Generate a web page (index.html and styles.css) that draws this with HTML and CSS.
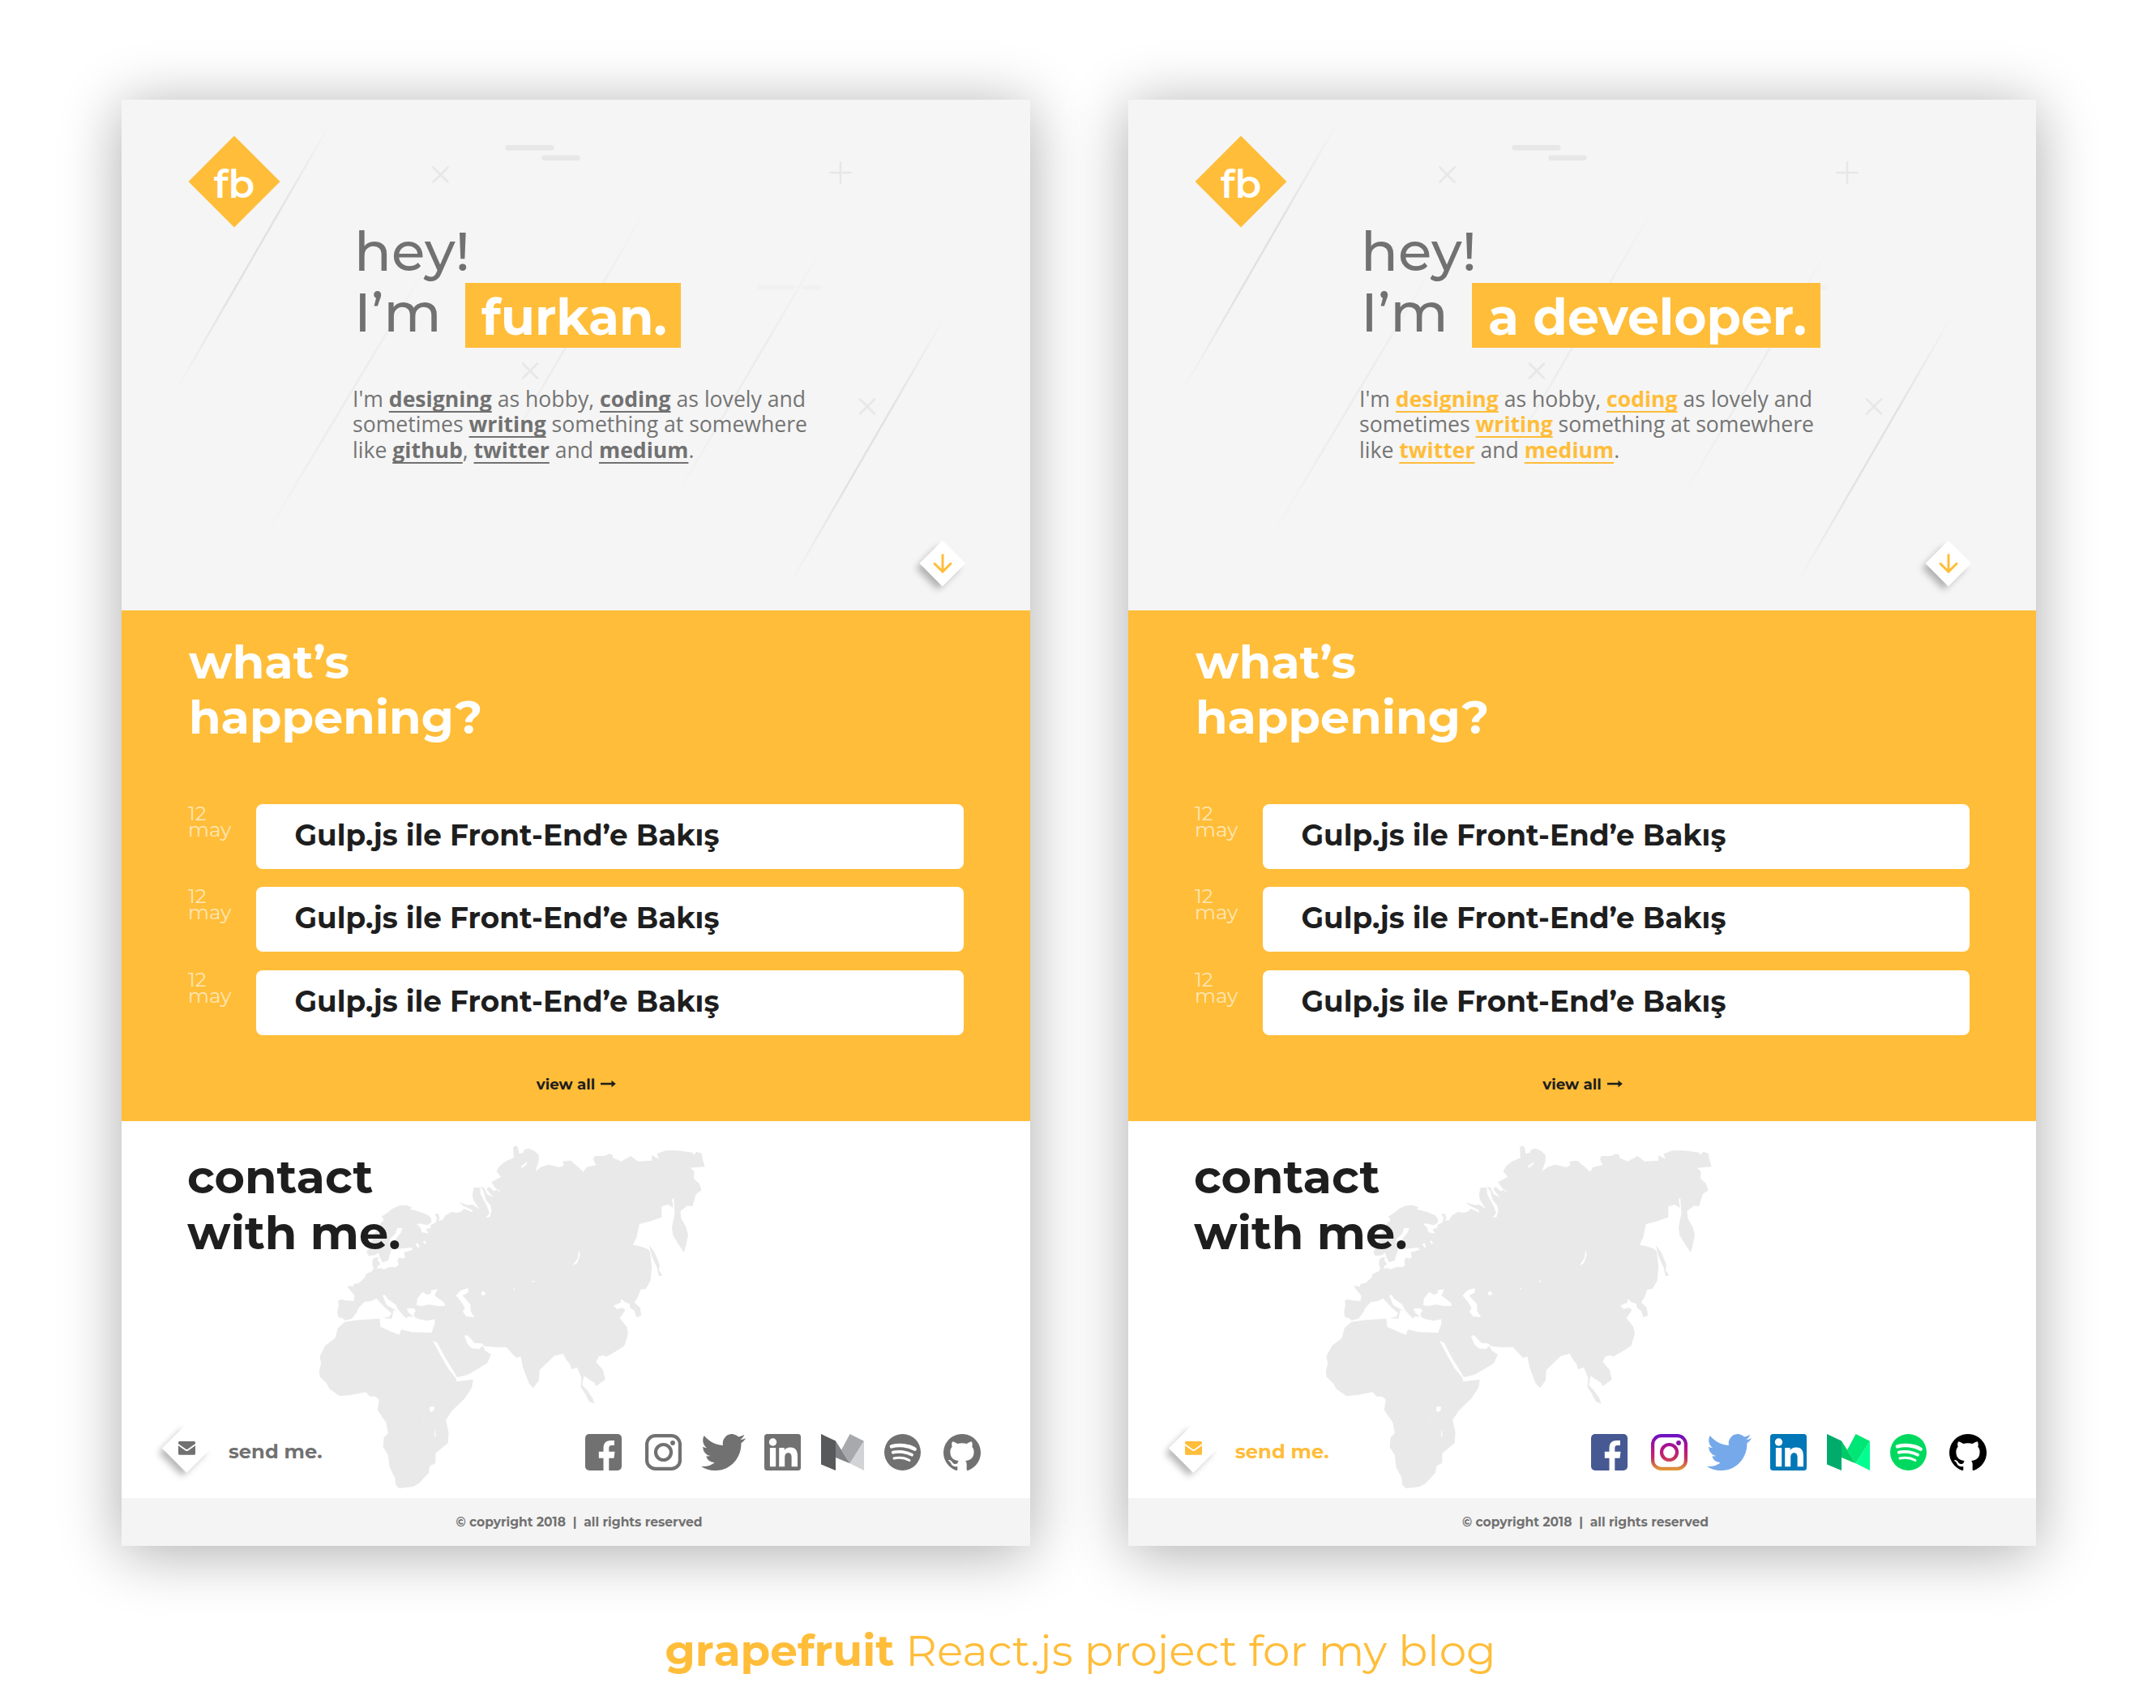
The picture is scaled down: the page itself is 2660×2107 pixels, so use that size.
FILE: index.html
```
<!DOCTYPE html>
<html lang="en">
<head>
<meta charset="utf-8">
<title>grapefruit</title>
<link rel="stylesheet" href="styles.css">
</head>
<body>
<svg class="defs" width="0" height="0" aria-hidden="true">
  <defs>
    <linearGradient id="fade" x1="0" y1="0" x2="0" y2="1">
      <stop offset="0" stop-color="#e1e1e1" stop-opacity="0"/>
      <stop offset=".35" stop-color="#e1e1e1"/>
      <stop offset=".65" stop-color="#e1e1e1"/>
      <stop offset="1" stop-color="#e1e1e1" stop-opacity="0"/>
    </linearGradient>
    <linearGradient id="insta" x1="0" y1="0" x2="0" y2="45" gradientUnits="userSpaceOnUse">
      <stop offset="0" stop-color="#6613c8"/>
      <stop offset=".35" stop-color="#b0108f"/>
      <stop offset=".65" stop-color="#c42a63"/>
      <stop offset="1" stop-color="#e2a035"/>
    </linearGradient>
    <symbol id="decor" viewBox="0 0 1121 630">
      <g stroke="url(#fade)" stroke-width="2.4">
        <path d="M257 30 68 357"/>
        <path d="M1016 267 826 595"/>
        <g opacity=".4">
          <path d="M374 209 180 533"/>
          <path d="M646 137 465 448"/>
          <path d="M863 185 685 488"/>
        </g>
      </g>
      <g stroke="#e7e7e7" stroke-width="2.6" stroke-linecap="round">
        <path d="M384.500 83.500l18 18m0-18l-18 18"/>
        <path d="M495 325.500l18 18m0-18l-18 18"/>
        <path d="M911 369.500l18 18m0-18l-18 18"/>
        <path d="M874.500 90h25m-12.500-12.500v25"/>
      </g>
      <rect x="473.500" y="56" width="60" height="6.500" rx="3" fill="#e7e7e7"/>
      <rect x="518.500" y="68.500" width="47" height="6.500" rx="3" fill="#e7e7e7"/>
      <rect x="784" y="228.500" width="47" height="6" rx="3" fill="#f1f1f1"/>
      <rect x="839" y="228.500" width="24" height="6" rx="3" fill="#f1f1f1"/>
    </symbol>
    <symbol id="map" viewBox="0 0 1568 1440" preserveAspectRatio="none">
      <path fill="#e9e9e9" fill-rule="evenodd" d="M190 747L182 738 167 735 163 715 168 690 166 673 178 669 195 673 222 675 225 655 215 642 205 630 200 622 203 618 220 622 222 612 240 608 262 588 265 575 290 563 293 552 288 540 290 520 300 514 310 512 308 525 318 538 308 545 305 555 320 553 330 558 350 549 372 550 383 541 379 528 383 514 398 518 406 512 402 495 433 485 430 477 400 480 378 483 370 460 373 445 392 420 396 405 378 404 372 425 352 445 348 470 358 485 350 505 345 525 325 532 315 512 310 495 300 505 275 508 268 495 280 470 300 420 318 388 330 375 322 362 340 350 362 332 385 322 410 320 430 328 425 335 460 345 490 358 500 372 500 385 485 394 455 388 448 390 462 405 465 420 490 425 480 408 497 405 498 393 515 385 520 368 512 352 525 352 530 368 525 378 540 375 550 358 572 345 590 348 605 345 617 333 648 347 646 338 610 320 600 310 632 320 648 318 672 335 650 300 647 280 652 255 675 255 676 280 690 305 700 325 708 350 695 366 710 364 716 340 712 322 695 300 688 270 676 253 688 255 700 280 722 292 698 262 705 252 725 268 740 262 752 278 728 255 715 235 750 215 733 195 745 175 765 158 795 145 793 105 805 100 812 112 814 130 830 125 832 115 850 110 870 120 885 135 885 155 873 195 895 178 920 170 960 180 975 172 970 158 1000 155 1015 170 1025 178 1045 197 1055 180 1090 172 1080 150 1085 138 1120 138 1138 130 1150 135 1150 145 1180 158 1215 138 1240 158 1290 155 1290 135 1315 150 1308 130 1340 118 1380 118 1435 125 1440 135 1450 122 1468 128 1472 150 1480 178 1450 180 1428 182 1442 195 1440 222 1460 240 1468 265 1448 280 1435 325 1418 322 1392 342 1395 370 1412 400 1420 430 1412 470 1405 495 1385 465 1365 430 1362 400 1372 350 1368 292 1362 300 1367 330 1348 318 1325 325 1325 365 1305 372 1290 378 1245 390 1235 440 1222 467 1245 472 1270 480 1283 490 1290 550 1285 600 1268 630 1250 632 1240 660 1228 680 1248 700 1252 728 1235 735 1228 712 1212 700 1210 685 1195 680 1180 667 1178 680 1153 692 1165 705 1185 700 1195 708 1175 738 1200 770 1205 795 1192 840 1160 862 1125 882 1120 875 1100 880 1090 900 1115 930 1123 965 1090 990 1085 978 1065 965 1047 952 1040 985 1058 1005 1078 1035 1085 1055 1065 1047 1052 1020 1035 992 1038 960 1022 920 1002 928 995 905 985 895 972 870 940 878 888 930 885 970 865 997 850 980 828 920 820 880 805 885 792 872 768 845 730 846 692 842 680 832 655 830 630 802 618 803 630 835 645 850 672 853 685 840 692 858 714 872 700 905 660 930 630 948 592 957 580 935 550 885 520 828 505 822 520 850 535 880 560 925 588 960 590 973 650 965 645 995 620 1035 575 1080 552 1115 562 1160 560 1200 515 1238 515 1275 495 1285 490 1312 455 1350 435 1362 385 1368 372 1355 370 1330 350 1290 345 1245 327 1215 330 1180 345 1165 338 1125 307 1078 313 1040 300 1028 280 1028 265 1012 215 1022 172 1027 135 1000 125 980 100 955 98 935 105 905 100 880 120 840 155 812 165 775 190 752 240 745 315 740 318 770 350 785 385 800 392 780 430 790 500 792 512 760 512 742 485 748 455 742 440 735 437 720 445 712 437 702 412 703 418 718 436 733 414 733 412 740 400 730 380 705 372 688 345 668 333 652 325 655 340 690 378 712 365 708 358 740 325 738 350 733 357 720 330 695 303 665 285 675 260 678 240 700 232 718 215 740zM447 690L450 665 468 641 485 652 500 645 498 635 522 631 512 655 545 680 550 692 525 694 490 688 465 694zM588 655L605 635 632 627 632 643 612 655 640 688 640 710 654 735 625 732 613 715 620 700 605 675zM678 647q2-10 10-8q8 6 4 13q-10 6-14-5zM1028 487l5 18-11 30-17 10 20-30zM790 636l10-14-2 9zM860 598l13 6-8 1zM820 178l24-20-4 12-14 12zM443 465l8-5 7 14-6 4zM470 455l6-4 6 10-4 4zM493 1080l2-14 16 0-1 11-10 10zM470 1100l3 18 11 18-9-14zM511 1150l0 15 3 18 2-14z"/>
      <path fill="#e9e9e9" d="M1280 468L1300 495 1318 540 1315 560 1328 580 1315 583 1308 550 1290 510z"/>
    </symbol>
    <symbol id="i-down" viewBox="0 0 24 24"><path d="M12 .5V22M1.200 11.500 12 22.300 22.800 11.500" fill="none" stroke="#ffbd39" stroke-width="3"/></symbol>
    <symbol id="i-mail" viewBox="0 0 21 17"><path fill="currentColor" d="M1.500 0h18A1.500 1.500 0 0 1 21 1.500V3L11.500 9.800Q10.500 10.400 9.500 9.800L0 3V1.500A1.500 1.500 0 0 1 1.500 0zM0 5.200L8.800 11.500Q10.500 12.500 12.200 11.500L21 5.200V15.300A1.500 1.500 0 0 1 19.500 16.800H1.500A1.500 1.500 0 0 1 0 15.300z"/></symbol>
    <symbol id="i-arrow" viewBox="0 0 19 10"><path fill="currentColor" d="M0 3.800H13.500V.8L18.800 5 13.500 9.200V6.200H0z"/></symbol>
    <symbol id="i-facebook" viewBox="0 0 45 45"><rect width="45" height="45" rx="5" fill="currentColor"/><path fill="#fff" d="M22.500 45V29.700H16.800V21.700H22.500V17C22.500 11 26 8 31.500 8H35.900V14H32.500C30 14 29.300 15.200 29.300 17.500V21.700H36.500L35.500 29.700H29.300V45z"/></symbol>
    <symbol id="i-linkedin" viewBox="0 0 45 45"><rect width="45" height="45" rx="3.500" fill="currentColor"/><g fill="#fff"><circle cx="10.500" cy="10" r="4.700"/><rect x="6.900" y="17" width="7.300" height="23.300" rx=".8"/><path d="M18.200 17H24.700V20C26 17.800 28.500 16.400 32 16.400 39 16.400 41 21 41 27.500V40.300H33.600V29C33.600 25.500 32.500 23.200 29.600 23.200 26.400 23.200 25.200 25.500 25.200 29V40.300H18.200z"/></g></symbol>
    <symbol id="i-twitter" viewBox="0 2.250 24 19.500" preserveAspectRatio="none"><path fill="currentColor" d="M23.953 4.570a10 10 0 01-2.825.775 4.958 4.958 0 002.163-2.723c-.951.555-2.005.959-3.127 1.184a4.920 4.920 0 00-8.384 4.482C7.690 8.095 4.067 6.130 1.640 3.162a4.822 4.822 0 00-.666 2.475c0 1.710.870 3.213 2.188 4.096a4.904 4.904 0 01-2.228-.616v.060a4.923 4.923 0 003.946 4.827 4.996 4.996 0 01-2.212.085 4.936 4.936 0 004.604 3.417 9.867 9.867 0 01-6.102 2.105c-.390 0-.779-.023-1.170-.067a13.995 13.995 0 007.557 2.209c9.053 0 13.998-7.496 13.998-13.985 0-.210 0-.420-.015-.630A9.935 9.935 0 0024 4.590z"/></symbol>
    <symbol id="i-spotify" viewBox="0 0 45 45"><circle cx="22.500" cy="22.500" r="22.500" fill="currentColor"/><g fill="none" stroke="#fff" stroke-linecap="round"><path d="M9 15.400C18 12.800 30 14 37.600 18.600" stroke-width="4.600"/><path d="M10.800 22.700C18 20.800 27.500 22 34 25.700" stroke-width="3.800"/><path d="M12 30C18 28.700 25.500 29.400 31 32.500" stroke-width="3"/></g></symbol>
    <symbol id="i-github" viewBox="0 .297 24 23.420" preserveAspectRatio="none"><path fill="currentColor" d="M12 .297c-6.630 0-12 5.373-12 12 0 5.303 3.438 9.800 8.205 11.385.600.113.820-.258.820-.577 0-.285-.010-1.040-.015-2.040-3.338.724-4.042-1.610-4.042-1.610C4.422 18.070 3.633 17.700 3.633 17.700c-1.087-.744.084-.729.084-.729 1.205.084 1.838 1.236 1.838 1.236 1.070 1.835 2.809 1.305 3.495.998.108-.776.417-1.305.760-1.605-2.665-.300-5.466-1.332-5.466-5.930 0-1.310.465-2.380 1.235-3.220-.135-.303-.540-1.523.105-3.176 0 0 1.005-.322 3.300 1.230.960-.267 1.980-.399 3-.405 1.020.006 2.040.138 3 .405 2.280-1.552 3.285-1.230 3.285-1.230.645 1.653.240 2.873.120 3.176.765.840 1.230 1.910 1.230 3.220 0 4.610-2.805 5.625-5.475 5.920.420.360.810 1.096.810 2.220 0 1.606-.015 2.896-.015 3.286 0 .315.210.690.825.570C20.565 22.092 24 17.592 24 12.297c0-6.627-5.373-12-12-12"/></symbol>
    <symbol id="i-instagram" viewBox="0 0 45 45"><g fill="none" stroke-width="4.200"><rect x="2.100" y="2.100" width="40.800" height="40.800" rx="10.500"/><circle cx="22.500" cy="22.500" r="9.500"/></g><circle cx="34" cy="11" r="2.900" stroke="none"/></symbol>
    <symbol id="i-medium" viewBox="0 0 53 45"><path class="m1" d="M0 0 18 8.500V45L0 37.500z"/><path class="m2" d="M18 8.500 35.600 36.300 18 29z"/><path class="m3" d="M35.600 0 53 8.700 35.600 36.300 25 19.700z"/><path class="m4" d="M53 8.700V45L35.600 36.300z"/></symbol>
  </defs>
</svg>

<main class="boards">
  <article class="board">
    <section class="hero">
      <svg class="decor"><use href="#decor"/></svg>
      <div class="logo"><span>fb</span></div>
      <div class="intro">
        <h1>hey!<span class="iam"><span class="im">I’m</span><mark>furkan.</mark></span></h1>
        <p>I'm <a>designing</a> as hobby, <a>coding</a> as lovely and<br>sometimes <a>writing</a> something at somewhere<br>like <a>github</a>, <a>twitter</a> and <a>medium</a>.</p>
      </div>
      <div class="down diamond"><svg width="24" height="24"><use href="#i-down"/></svg></div>
    </section>
    <section class="news">
      <h2>what’s<br>happening?</h2>
      <ul>
        <li><time>12<br>may</time><div class="post">Gulp.js ile Front-End’e Bakış</div></li>
        <li><time>12<br>may</time><div class="post">Gulp.js ile Front-End’e Bakış</div></li>
        <li><time>12<br>may</time><div class="post">Gulp.js ile Front-End’e Bakış</div></li>
      </ul>
      <div class="all">view all <svg width="19" height="10"><use href="#i-arrow"/></svg></div>
    </section>
    <section class="contact">
      <svg class="map"><use href="#map"/></svg>
      <h2>contact<br>with me.</h2>
      <div class="reach">
        <div class="mail diamond"><svg width="21" height="17"><use href="#i-mail"/></svg></div>
        <span class="send">send me.</span>
        <div class="social">
          <svg class="facebook" width="45" height="45"><use href="#i-facebook"/></svg>
          <svg class="instagram" width="45" height="45"><use href="#i-instagram"/></svg>
          <svg class="twitter" width="55" height="45"><use href="#i-twitter"/></svg>
          <svg class="linkedin" width="45" height="45"><use href="#i-linkedin"/></svg>
          <svg class="medium" width="53" height="45"><use href="#i-medium"/></svg>
          <svg class="spotify" width="45" height="45"><use href="#i-spotify"/></svg>
          <svg class="github" width="46" height="45"><use href="#i-github"/></svg>
        </div>
      </div>
    </section>
    <footer>© copyright 2018 &nbsp;|&nbsp; all rights reserved</footer>
  </article>

  <article class="board color">
    <section class="hero">
      <svg class="decor"><use href="#decor"/></svg>
      <div class="logo"><span>fb</span></div>
      <div class="intro">
        <h1>hey!<span class="iam"><span class="im">I’m</span><mark>a developer.</mark></span></h1>
        <p>I'm <a>designing</a> as hobby, <a>coding</a> as lovely and<br>sometimes <a>writing</a> something at somewhere<br>like <a>twitter</a> and <a>medium</a>.</p>
      </div>
      <div class="down diamond"><svg width="24" height="24"><use href="#i-down"/></svg></div>
    </section>
    <section class="news">
      <h2>what’s<br>happening?</h2>
      <ul>
        <li><time>12<br>may</time><div class="post">Gulp.js ile Front-End’e Bakış</div></li>
        <li><time>12<br>may</time><div class="post">Gulp.js ile Front-End’e Bakış</div></li>
        <li><time>12<br>may</time><div class="post">Gulp.js ile Front-End’e Bakış</div></li>
      </ul>
      <div class="all">view all <svg width="19" height="10"><use href="#i-arrow"/></svg></div>
    </section>
    <section class="contact">
      <svg class="map"><use href="#map"/></svg>
      <h2>contact<br>with me.</h2>
      <div class="reach">
        <div class="mail diamond"><svg width="21" height="17"><use href="#i-mail"/></svg></div>
        <span class="send">send me.</span>
        <div class="social">
          <svg class="facebook" width="45" height="45"><use href="#i-facebook"/></svg>
          <svg class="instagram" width="45" height="45"><use href="#i-instagram"/></svg>
          <svg class="twitter" width="55" height="45"><use href="#i-twitter"/></svg>
          <svg class="linkedin" width="45" height="45"><use href="#i-linkedin"/></svg>
          <svg class="medium" width="53" height="45"><use href="#i-medium"/></svg>
          <svg class="spotify" width="45" height="45"><use href="#i-spotify"/></svg>
          <svg class="github" width="46" height="45"><use href="#i-github"/></svg>
        </div>
      </div>
    </section>
    <footer>© copyright 2018 &nbsp;|&nbsp; all rights reserved</footer>
  </article>
</main>
<p class="caption"><b>grapefruit</b> React.js project for my blog</p>
</body>
</html>
```
FILE: styles.css
```
* { box-sizing: border-box; }
body { margin: 0; background: #fff; font-family: Montserrat, Inter, sans-serif; color: #1e1e1e; }
h1, h2, p, ul { margin: 0; padding: 0; }
svg { display: block; }
.defs { position: absolute; }

.boards { display: flex; gap: 121px; padding: 123px 0 0 150px; }
.board { width: 1121px; height: 1784px; background: #fff; box-shadow: 0 8px 70px rgba(0, 0, 0, .33); color: #1e1e1e; }
.board.color { width: 1120px; }

.hero { position: relative; height: 630px; background: #f5f5f5; display: grid; grid-template-columns: 113px 1fr 56px; padding: 0 80.500px 0 82.500px; color: #717171; }
.decor { position: absolute; left: 0; top: 0; width: 1121px; height: 630px; }
.logo, .intro, .down { position: relative; }
.logo { margin-top: 44.500px; width: 113px; height: 113px; background: #ffbd39; clip-path: polygon(50% 0, 100% 50%, 50% 100%, 0 50%); color: #fff; font-size: 47.700px; font-weight: 600; line-height: 118px; text-align: center; }
.intro { margin: 150px 0 0 91.500px; white-space: nowrap; }
h1 { font-size: 67.500px; font-weight: 500; line-height: 74.500px; }
.iam { display: flex; height: 81.500px; }
.im { width: 137px; }
mark { margin-top: 1px; height: 80.500px; padding: 4px 17px 0 20px; background: #ffbd39; color: #fff; font-size: 61.500px; font-weight: 700; line-height: 76.500px; }
.intro p { margin: 47.600px 0 0 -2px; font-family: "Open Sans", "Noto Sans", sans-serif; font-size: 26.600px; font-weight: 400; line-height: 31.600px; color: #747474; }
.intro a { font-weight: 700; color: #717171; text-decoration: underline; text-decoration-thickness: 1.500px; text-underline-offset: 5px; text-decoration-skip-ink: none; }
.color .intro a { color: #ffbd39; }

.diamond { display: grid; place-items: center; }
.diamond::before { content: ""; grid-area: 1 / 1; width: 39.500px; height: 39.500px; background: #fff; transform: rotate(45deg); box-shadow: 0 8px 8px -1px rgba(0, 0, 0, .28); }
.diamond svg { grid-area: 1 / 1; position: relative; }
.down { width: 56px; height: 56px; align-self: end; margin-bottom: 30px; }

.news { height: 630px; padding: 29.500px 82px 0; background: #ffbd39; }
h2 { font-size: 57.300px; font-weight: 700; line-height: 68.500px; }
.news h2 { color: #fff; padding-left: 1px; }
.news ul { list-style: none; margin-top: 72px; display: flex; flex-direction: column; gap: 22.500px; }
.news li { display: grid; grid-template-columns: 84px 1fr; height: 80px; }
time { padding-top: 1px; font-size: 24.500px; font-weight: 400; line-height: 20px; color: #ffe6b5; }
.post { background: #fff; border-radius: 8px; padding-left: 47.500px; font-size: 35.800px; font-weight: 700; line-height: 77px; }
.all { display: flex; justify-content: center; align-items: center; gap: 7px; margin: 48px 0 0 1px; font-size: 18.300px; font-weight: 700; line-height: 25px; }

.contact { position: relative; height: 465px; padding: 34px 47px 31px 50px; display: flex; flex-direction: column; justify-content: space-between; }
.map { position: absolute; left: 210px; top: -3px; width: 540px; height: 480px; }
.contact h2 { position: relative; padding-left: 31px; line-height: 69px; }
.reach { position: relative; display: flex; height: 60px; color: #717171; }
.color .reach { color: #ffbd39; }
.mail { width: 60px; height: 60px; margin-top: -1px; }
.mail::before { width: 42.500px; height: 42.500px; }
.send { margin: 4px 0 0 22px; font-size: 24.200px; font-weight: 700; line-height: 60px; }
.social { display: grid; grid-template-columns: repeat(7, 73.750px); justify-items: center; margin: 12px 0 0 auto; height: 45px; }
.instagram { fill: #717171; stroke: #717171; }
.m1 { fill: var(--m1, #58595b); }
.m2 { fill: var(--m2, #808285); }
.m3 { fill: var(--m3, #a7a9ac); }
.m4 { fill: var(--m4, #d1d3d4); }
.color .facebook { color: #475993; }
.color .instagram { fill: #8d10a5; stroke: url(#insta); }
.color .twitter { color: #76a9ea; }
.color .linkedin { color: #0077b7; }
.color .medium { --m1: #00ab6c; --m2: #00c965; --m3: #00e676; --m4: #00ff90; }
.color .spotify { color: #00d95f; }
.color .github { color: #000; }

footer { height: 59px; padding-left: 8px; background: #f4f4f4; text-align: center; font-size: 15.500px; font-weight: 700; line-height: 60px; color: #717171; }

.caption { margin-top: 95px; padding-left: 6px; text-align: center; font-size: 53.300px; font-weight: 400; line-height: 67px; color: #ffbd39; }
.caption b { font-weight: 700; font-kerning: none; }
```
